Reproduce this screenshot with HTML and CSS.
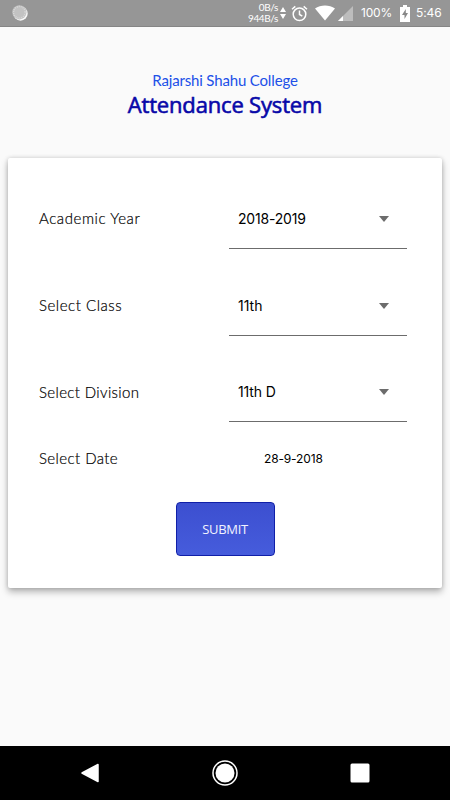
FILE: index.html
```html
<!DOCTYPE html>
<html lang="en">
<head>
<meta charset="utf-8">
<title>Attendance System</title>
<link rel="stylesheet" href="styles.css">
</head>
<body>
<header class="status">
  <svg class="sync" width="16" height="16" viewBox="0 0 16 16"><circle cx="8.5" cy="8.5" r="7.2" fill="#f7f7f7"/><circle cx="7.4" cy="7.3" r="7.1" fill="#c2c2c2"/><circle cx="7.4" cy="7.3" r="5.8" fill="none" stroke="#d8d8d8" stroke-width="1.4" stroke-dasharray="1 1"/></svg>
  <div class="speed"><span>0B/s</span><span>944B/s</span></div>
  <svg class="arrows" width="6" height="14" viewBox="0 0 6 14"><path d="M0 6 3 1l3 5zM0 8h6l-3 5z" fill="#fff"/></svg>
  <svg class="alarm" width="17" height="17" viewBox="0 0 17 17" fill="none" stroke="#fff" stroke-width="1.5"><circle cx="8.5" cy="9.3" r="6.3"/><path d="M8.5 5.5v4l2.8 1.700M1 4.200l3.300-2.800M16 4.200l-3.300-2.800"/></svg>
  <svg class="wifi" width="20" height="16" viewBox="0 0 20 16"><path d="M0 3.500C5.500-.5 14.500-.5 20 3.500L10 15.500z" fill="#fff"/></svg>
  <svg class="signal" width="15" height="15" viewBox="0 0 15 15"><path d="M15 0v15H0z" fill="#bdbdbd"/><path d="M5 10v5H0z" fill="#fff"/></svg>
  <span class="percent">100%</span>
  <svg class="battery" width="10" height="17" viewBox="0 0 10 17"><path d="M3 0h4v2h3v15H0V2h3z" fill="#fff"/><path d="M5.800 4 2 10h2.500v4L8 8H5.800z" fill="#888"/></svg>
  <span class="clock">5:46</span>
</header>
<main class="page">
  <div class="college">Rajarshi Shahu College</div>
  <h1 class="title">Attendance System</h1>
  <form class="card">
    <div class="row"><label class="label year">Academic Year</label><div class="select wide"><span>2018-2019</span><i class="caret"></i></div></div>
    <div class="row"><label class="label class">Select Class</label><div class="select"><span>11th</span><i class="caret"></i></div></div>
    <div class="row"><label class="label division">Select Division</label><div class="select last"><span>11th D</span><i class="caret"></i></div></div>
    <div class="row date-row"><label class="label date-label">Select Date</label><span class="date">28-9-2018</span></div>
    <button class="submit" type="button">SUBMIT</button>
  </form>
</main>
<nav class="nav">
  <svg width="20" height="20" viewBox="0 0 20 20"><path d="M18 1.500v17L2 10z" fill="#fff" stroke="#fff" stroke-width="1.500" stroke-linejoin="round"/></svg>
  <svg width="26" height="26" viewBox="0 0 26 26"><circle cx="13" cy="13" r="12" fill="none" stroke="#fff" stroke-width="1.500"/><circle cx="13" cy="13" r="9.500" fill="#fff"/></svg>
  <svg width="20" height="20" viewBox="0 0 20 20"><rect x=".5" y=".5" width="19" height="19" rx="1.500" fill="#fff"/></svg>
</nav>
</body>
</html>
```
FILE: styles.css
```css
* { box-sizing: border-box; }
body {
  margin: 0;
  width: 450px;
  height: 800px;
  display: flex;
  flex-direction: column;
  background: #fafafa;
  font-family: Lato, sans-serif;
  overflow: hidden;
}
.status {
  height: 27px;
  flex: none;
  display: flex;
  align-items: center;
  padding-left: 12px;
  background: #969696;
  border-bottom: 1px solid #858585;
  color: #fff;
  white-space: nowrap;
}
.speed {
  width: 50px;
  margin-left: 200px;
  display: flex;
  flex-direction: column;
  align-items: flex-end;
  font: 10px/11px Lato, sans-serif;
  letter-spacing: -.4px;
}
.arrows { margin-left: 2px; }
.alarm { margin-left: 5px; }
.wifi { margin-left: 7px; }
.signal { margin-left: 3px; }
.percent {
  width: 31px;
  margin-left: 8px;
  font: 12px/16px Inter, sans-serif;
  letter-spacing: -.2px;
}
.battery { margin-left: 8px; }
.clock {
  margin-left: 6px;
  font: 12px/16px Inter, sans-serif;
  letter-spacing: -.1px;
}
.page { flex: 1; padding: 44px 8px 0; }
.college {
  height: 18px;
  text-align: center;
  color: #2050e8;
  font-size: 15px;
  line-height: 18px;
  letter-spacing: -.16px;
}
.title {
  margin: 0;
  height: 32px;
  text-align: center;
  color: #0808a8;
  font: 400 22px/30px "Open Sans", sans-serif;
  letter-spacing: -.17px;
  -webkit-text-stroke: .6px #0808a8;
}
.card {
  height: 430px;
  margin-top: 36.500px;
  padding: 30.500px 35px 0 31px;
  background: #fff;
  border-radius: 2px;
  box-shadow: 0 4px 7px rgba(0,0,0,.28), 0 0 4px rgba(0,0,0,.16);
}
.row {
  height: 87px;
  display: flex;
  justify-content: space-between;
}
.label {
  padding-top: 20px;
  font-size: 15px;
  font-weight: 300;
  line-height: 20px;
  color: #000;
  -webkit-text-stroke: .2px #000;
}
.year { letter-spacing: .58px; }
.class { letter-spacing: .54px; }
.division { letter-spacing: .36px; }
.date-label { letter-spacing: .42px; }
.select {
  width: 178px;
  height: 61px;
  padding: 1px 18px 0 9px;
  display: flex;
  align-items: center;
  justify-content: space-between;
  border-bottom: 1px solid #6c6c6c;
  font: 14px/20px Inter, sans-serif;
  color: #000;
}
.wide { letter-spacing: -.2px; }
.last { height: 60px; letter-spacing: -.15px; }
.caret {
  border: 5.500px solid transparent;
  border-top: 6px solid #6c6c6c;
  border-bottom: 0;
}
.date-row { height: 53px; }
.date-row .label { padding-top: 0; margin-top: -1px; }
.date {
  width: 143px;
  font: 12px/20px Inter, sans-serif;
  letter-spacing: -.15px;
  color: #000;
}
.submit {
  display: block;
  width: 99px;
  height: 54px;
  margin: 0 0 0 136.500px;
  padding: 0;
  border: 1px solid #101fa8;
  border-radius: 4px;
  background: linear-gradient(#3c4fd0, #465cdc);
  color: #f2f3ff;
  font: 13px/18px "Open Sans", sans-serif;
  letter-spacing: -.3px;
}
.nav {
  height: 54px;
  flex: none;
  display: flex;
  align-items: center;
  justify-content: space-between;
  padding: 0 80px;
  background: #000;
}
```
